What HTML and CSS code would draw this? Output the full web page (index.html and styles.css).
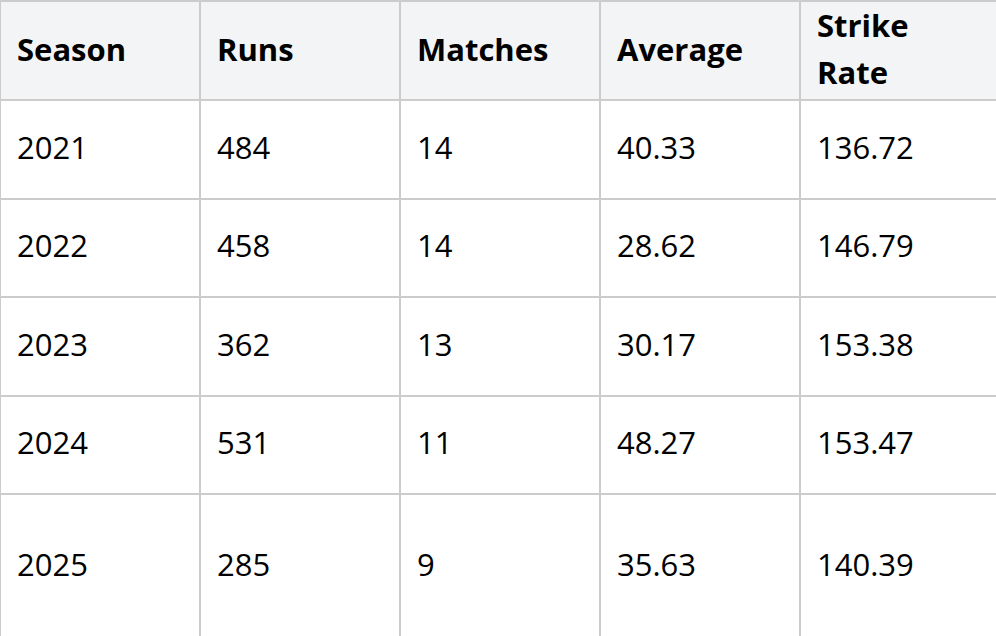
FILE: index.html
```html
<!DOCTYPE html>
<html>
<head>
<meta charset="utf-8">
<link rel="stylesheet" href="styles.css">
</head>
<body>
<table class="stats">
  <thead>
    <tr>
      <th>Season</th>
      <th>Runs</th>
      <th>Matches</th>
      <th>Average</th>
      <th>Strike<br>Rate</th>
    </tr>
  </thead>
  <tbody>
    <tr><td>2021</td><td>484</td><td>14</td><td>40.33</td><td>136.72</td></tr>
    <tr><td>2022</td><td>458</td><td>14</td><td>28.62</td><td>146.79</td></tr>
    <tr><td>2023</td><td>362</td><td>13</td><td>30.17</td><td>153.38</td></tr>
    <tr><td>2024</td><td>531</td><td>11</td><td>48.27</td><td>153.47</td></tr>
    <tr class="last"><td>2025</td><td>285</td><td>9</td><td>35.63</td><td>140.39</td></tr>
  </tbody>
</table>
</body>
</html>
```

FILE: styles.css
```css
html, body {
  margin: 0;
  padding: 0;
  background: #ffffff;
  overflow: hidden;
}
body {
  font-family: "Open Sans", "Noto Sans", sans-serif;
  color: #000;
}
.stats {
  border-collapse: collapse;
  table-layout: fixed;
  width: 1002px;
  margin-left: -1px;
  margin-top: 0;
}
.stats th,
.stats td {
  border: 2px solid #cccccc;
  width: 200px;
  padding: 0 16px 4px 16px;
  text-align: left;
  vertical-align: middle;
  font-size: 31px;
  line-height: 47px;
  box-sizing: border-box;
}
.stats th {
  background: #f3f4f6;
  font-weight: 700;
  height: 99px;
  padding-bottom: 3px;
}
.stats td {
  font-weight: 400;
  height: 98.5px;
}
.stats tr.last td {
  height: 150px;
  padding-bottom: 10px;
}
```
